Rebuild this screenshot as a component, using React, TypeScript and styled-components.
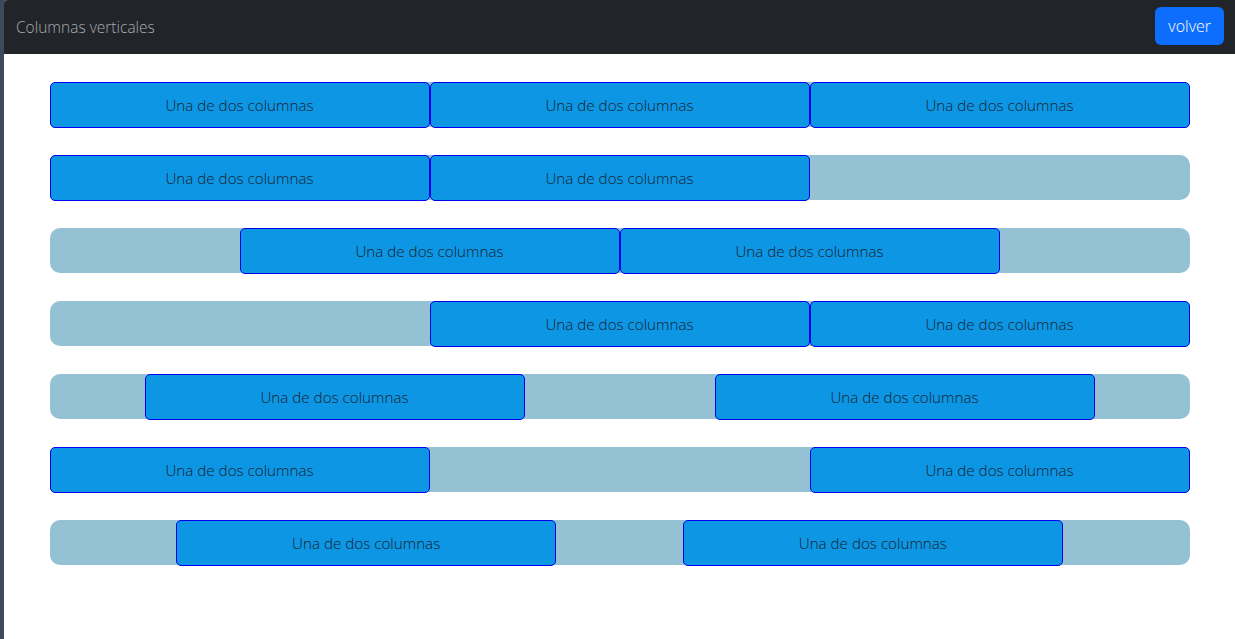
import React from 'react';
import styled, { createGlobalStyle } from 'styled-components';

const GlobalStyle = createGlobalStyle`
  html, body {
    margin: 0;
    padding: 0;
    height: 100%;
    background: #3d4a5c;
    font-family: "Open Sans", "Liberation Sans", sans-serif;
  }
  #root {
    height: 100%;
  }
`;

const Page = styled.div`
  margin-left: 4px;
  min-height: 100vh;
  background: #fff;
  border-top-left-radius: 4px;
  overflow: hidden;
`;

const Header = styled.header`
  height: 54px;
  background: #212529;
  display: flex;
  align-items: center;
  justify-content: space-between;
  padding: 0 11px 0 12px;
  box-sizing: border-box;
`;

const Title = styled.span`
  color: #a8abaf;
  font-size: 15.5px;
  font-weight: 300;
  margin-top: -1px;
`;

const BackButton = styled.button`
  background: #0d6efd;
  color: #fff;
  border: none;
  border-radius: 6px;
  height: 38px;
  padding: 0 13px;
  margin-top: -2px;
  font-family: inherit;
  font-size: 16px;
  font-weight: 300;
  cursor: pointer;
`;

const Container = styled.main`
  width: 1140px;
  margin: 0 auto;
  padding-top: 28px;
  display: flex;
  flex-direction: column;
  gap: 28px;
`;

type Justify = 'flex-start' | 'center' | 'flex-end' | 'space-around' | 'space-between' | 'space-evenly';

const Row = styled.div<{ $justify: Justify }>`
  display: flex;
  justify-content: ${({ $justify }) => $justify};
  background: #94c2d4;
  border-radius: 10px;
  height: 45px;
`;

const Col = styled.div`
  width: 380px;
  height: 46px;
  box-sizing: border-box;
  background: #0c96e4;
  border: 1px solid #0000ee;
  border-radius: 5px;
  display: flex;
  align-items: center;
  justify-content: center;
  color: #17222e;
  font-size: 15.2px;
  font-weight: 300;
`;

const rows: { justify: Justify; cols: number }[] = [
  { justify: 'flex-start', cols: 3 },
  { justify: 'flex-start', cols: 2 },
  { justify: 'center', cols: 2 },
  { justify: 'flex-end', cols: 2 },
  { justify: 'space-around', cols: 2 },
  { justify: 'space-between', cols: 2 },
  { justify: 'space-evenly', cols: 2 },
];

const App: React.FC = () => {
  return (
    <>
      <GlobalStyle />
      <Page>
        <Header>
          <Title>Columnas verticales</Title>
          <BackButton>volver</BackButton>
        </Header>
        <Container>
          {rows.map((r, i) => (
            <Row key={i} $justify={r.justify}>
              {Array.from({ length: r.cols }).map((_, j) => (
                <Col key={j}>Una de dos columnas</Col>
              ))}
            </Row>
          ))}
        </Container>
      </Page>
    </>
  );
};

export default App;
